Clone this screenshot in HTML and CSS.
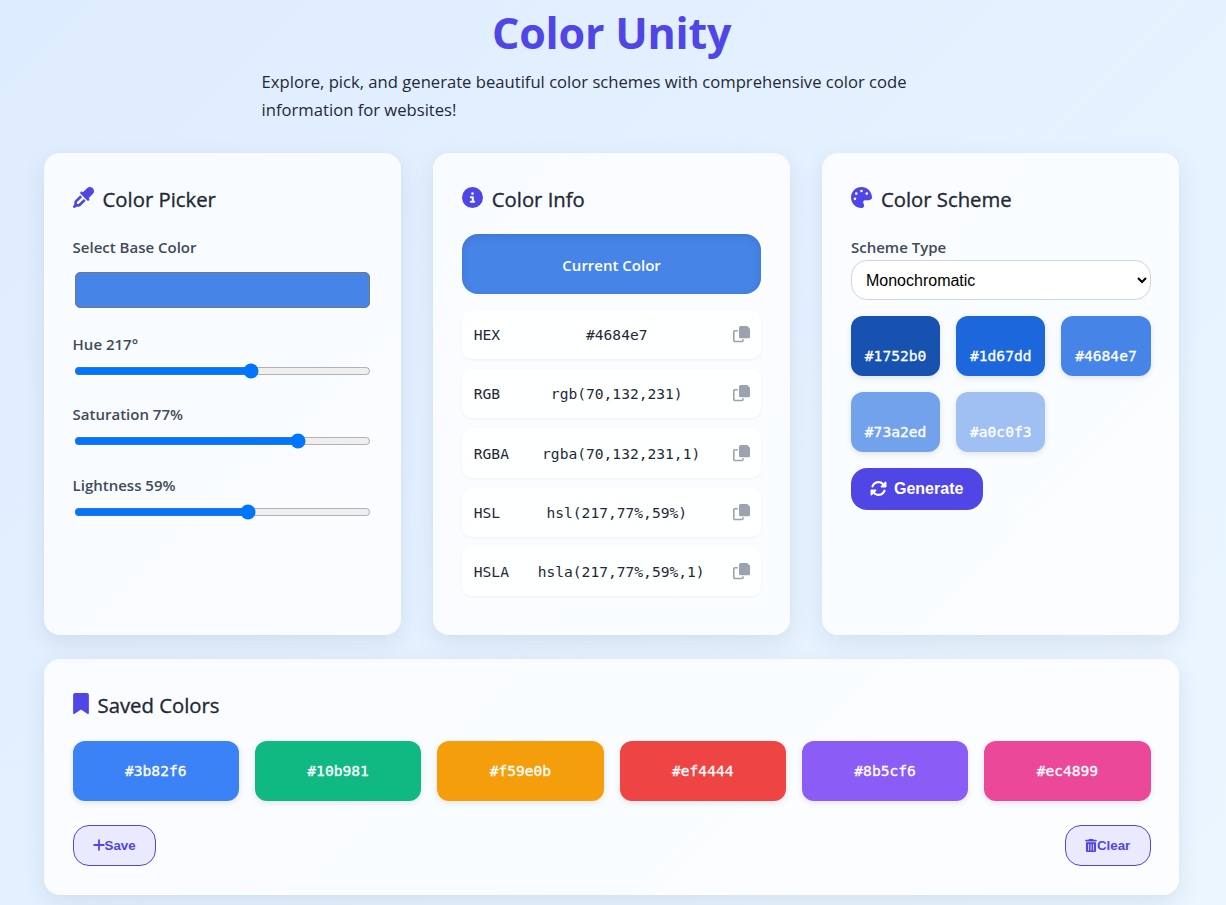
FILE: index.html
```html
<!DOCTYPE html>
<html lang="en">
<head>
<meta charset="utf-8">
<title>Color Unity</title>
<link rel="stylesheet" href="styles.css">
</head>
<body>
<svg class="sprite" width="0" height="0">
  <symbol id="copy" viewBox="0 0 17 17"><path d="M7.500 0H14.300L17 2.700V10.700A1.500 1.500 0 0 1 15.500 12.200H7.500A1.500 1.500 0 0 1 6 10.700V1.500A1.500 1.500 0 0 1 7.500 0z"/><path class="copy-back" d="M4.800 4.800H1.800A1 1 0 0 0 .8 5.800V14.500A1 1 0 0 0 1.800 15.500H9A1 1 0 0 0 10 14.500V13.200"/></symbol>
</svg>
<div class="container">
  <header class="header">
    <h1 class="title">Color Unity</h1>
    <p class="lead">Explore, pick, and generate beautiful color schemes with comprehensive color code<br>information for websites!</p>
  </header>
  <main class="grid">
    <section class="card">
      <h2 class="heading"><svg class="icon" viewBox="0 0 512 512"><path d="M341.6 29.2L240.100 130.800l-9.400-9.400c-12.500-12.500-32.800-12.500-45.300 0s-12.500 32.800 0 45.300l160 160c12.500 12.500 32.800 12.500 45.300 0s12.500-32.800 0-45.300l-9.400-9.400L482.800 170.400c39-39 39-102.200 0-141.100s-102.200-39-141.100 0zM55.400 323.300c-15 15-23.400 35.400-23.400 56.600v42.400L5.400 462.200c-8.500 12.700-6.800 29.600 4 40.400s27.700 12.500 40.400 4L89.700 480h42.400c21.200 0 41.600-8.400 56.600-23.400L309.400 335.900l-45.300-45.300L143.400 411.300c-3 3-7.100 4.700-11.300 4.700H96V379.900c0-4.200 1.700-8.300 4.700-11.300L221.400 247.900l-45.300-45.300L55.400 323.300z"/></svg><span>Color Picker</span></h2>
      <label class="label t-select" for="base">Select Base Color</label>
      <input class="base" id="base" type="color" value="#4684e7">
      <div class="control"><label class="label t-hue" for="hue">Hue 217°</label><input class="range" id="hue" type="range" min="0" max="360" value="217"></div>
      <div class="control"><label class="label t-sat" for="sat">Saturation 77%</label><input class="range" id="sat" type="range" min="0" max="100" value="77"></div>
      <div class="control"><label class="label t-light" for="light">Lightness 59%</label><input class="range" id="light" type="range" min="0" max="100" value="59"></div>
    </section>
    <section class="card">
      <h2 class="heading"><svg class="icon" viewBox="0 0 512 512"><path d="M256 512A256 256 0 1 0 256 0a256 256 0 1 0 0 512zM216 336h24V272H216c-13.300 0-24-10.700-24-24s10.700-24 24-24h48c13.300 0 24 10.700 24 24v88h8c13.300 0 24 10.700 24 24s-10.700 24-24 24H216c-13.300 0-24-10.700-24-24s10.700-24 24-24zm40-208a32 32 0 1 1 0 64 32 32 0 1 1 0-64z"/></svg><span>Color Info</span></h2>
      <div class="current">Current Color</div>
      <div class="codes">
        <div class="code"><span>HEX</span><span>#4684e7</span><svg class="copy"><use href="#copy"/></svg></div>
        <div class="code"><span>RGB</span><span>rgb(70,132,231)</span><svg class="copy"><use href="#copy"/></svg></div>
        <div class="code"><span>RGBA</span><span>rgba(70,132,231,1)</span><svg class="copy"><use href="#copy"/></svg></div>
        <div class="code"><span>HSL</span><span>hsl(217,77%,59%)</span><svg class="copy"><use href="#copy"/></svg></div>
        <div class="code"><span>HSLA</span><span>hsla(217,77%,59%,1)</span><svg class="copy"><use href="#copy"/></svg></div>
      </div>
    </section>
    <section class="card">
      <h2 class="heading"><svg class="icon" viewBox="0 0 512 512"><path d="M512 256c0 .9 0 1.800 0 2.700c-.4 36.500-33.600 61.300-70.100 61.300H344c-26.500 0-48 21.500-48 48c0 3.400 .4 6.700 1 9.900c2.100 10.200 6.500 20 10.800 29.900c6.100 13.800 12.100 27.500 12.100 42c0 31.800-21.600 60.700-53.400 62c-3.500 .1-7 .2-10.600 .2C114.600 512 0 397.400 0 256S114.600 0 256 0S512 114.600 512 256zM128 288a32 32 0 1 0 -64 0 32 32 0 1 0 64 0zm0-96a32 32 0 1 0 0-64 32 32 0 1 0 0 64zM288 96a32 32 0 1 0 -64 0 32 32 0 1 0 64 0zm96 96a32 32 0 1 0 0-64 32 32 0 1 0 0 64z"/></svg><span>Color Scheme</span></h2>
      <label class="label t-type" for="type">Scheme Type</label>
      <select class="select" id="type"><option>Monochromatic</option></select>
      <div class="scheme">
        <div class="swatch low c1">#1752b0</div><div class="swatch low c2">#1d67dd</div><div class="swatch low c3">#4684e7</div>
        <div class="swatch low c4">#73a2ed</div><div class="swatch low c5">#a0c0f3</div>
      </div>
      <button class="generate"><svg class="sync" viewBox="0 0 512 512"><path d="M142.900 142.900c62.200-62.200 162.700-62.500 225.300-1L327 183c-6.900 6.900-8.900 17.200-5.200 26.200s12.500 14.800 22.200 14.800H472c13.300 0 24-10.700 24-24V72c0-9.700-5.800-18.500-14.800-22.200s-19.300-1.700-26.200 5.200L413.400 96.600c-87.600-86.500-228.700-86.200-315.800 1C73.200 122 55.600 150.700 44.800 181.400c-5.900 16.700 2.900 34.900 19.500 40.800s34.900-2.900 40.800-19.500c7.700-21.800 20.200-42.300 37.800-59.800zM16 312V440c0 9.700 5.800 18.500 14.800 22.200s19.300 1.700 26.200-5.200l41.600-41.600c87.600 86.500 228.700 86.200 315.800-1c24.400-24.400 42.100-53.100 52.900-83.700c5.900-16.700-2.900-34.900-19.500-40.800s-34.900 2.900-40.800 19.500c-7.700 21.800-20.200 42.300-37.800 59.800c-62.200 62.200-162.700 62.500-225.300 1L185 329c6.900-6.900 8.900-17.200 5.200-26.200s-12.500-14.800-22.200-14.800H40c-13.300 0-24 10.700-24 24z"/></svg>Generate</button>
    </section>
  </main>
  <section class="card saved">
    <h2 class="heading"><svg class="icon mark" viewBox="0 0 384 512"><path d="M0 48V487.700C0 501.100 10.900 512 24.300 512c5 0 9.900-1.500 14-4.400L192 400 345.700 507.600c4.100 2.900 9 4.400 14 4.400c13.400 0 24.300-10.900 24.300-24.300V48c0-26.500-21.500-48-48-48H48C21.500 0 0 21.500 0 48z"/></svg><span>Saved Colors</span></h2>
    <div class="palette">
      <div class="swatch s1">#3b82f6</div><div class="swatch s2">#10b981</div><div class="swatch s3">#f59e0b</div>
      <div class="swatch s4">#ef4444</div><div class="swatch s5">#8b5cf6</div><div class="swatch s6">#ec4899</div>
    </div>
    <div class="actions">
      <button class="outline save"><svg class="plus" viewBox="0 0 12 12"><path d="M5.100.5h1.800v4.600h4.600v1.800H6.900v4.600H5.100V6.900H.5V5.100h4.600z"/></svg>Save</button>
      <button class="outline clear"><svg class="trash" viewBox="0 0 448 512"><path d="M135.200 17.700C140.600 6.800 151.700 0 163.800 0H284.200c12.100 0 23.200 6.800 28.600 17.700L320 32h96c17.700 0 32 14.300 32 32s-14.300 32-32 32H32C14.300 96 0 81.700 0 64S14.300 32 32 32h96l7.200-14.300zM32 128H416V448c0 35.300-28.700 64-64 64H96c-35.300 0-64-28.700-64-64V128zm96 64c-8.800 0-16 7.200-16 16V432c0 8.800 7.200 16 16 16s16-7.200 16-16V208c0-8.800-7.200-16-16-16zm96 0c-8.800 0-16 7.200-16 16V432c0 8.800 7.200 16 16 16s16-7.200 16-16V208c0-8.800-7.200-16-16-16zm96 0c-8.800 0-16 7.200-16 16V432c0 8.800 7.200 16 16 16s16-7.200 16-16V208c0-8.800-7.200-16-16-16z"/></svg>Clear</button>
    </div>
  </section>
</div>
</body>
</html>
```
FILE: styles.css
```css
* { box-sizing: border-box; }
body {
  margin: 0;
  height: 905px;
  overflow: hidden;
  font-family: "Open Sans", "Noto Sans", sans-serif;
  color: #1f2937;
  background: linear-gradient(135deg, #deecff 0%, #ebf6ff 100%);
}
.sprite { position: absolute; }
.container { width: 1135.600px; margin-left: 43.800px; }
.header { height: 153px; padding-top: 1px; display: flex; flex-direction: column; align-items: center; }
.title { margin: 0; font-size: 43px; font-weight: 700; line-height: 64px; letter-spacing: -.2px; color: #4f46e5; }
.lead { margin: 3px 0 0; width: 700px; font-size: 16.640px; font-weight: 400; line-height: 28px; white-space: nowrap; }
.grid { display: grid; grid-template-columns: repeat(3, 1fr); gap: 32px; }
.card {
  height: 482px;
  padding: 28.800px;
  border-radius: 16px;
  background: rgba(255, 255, 255, .8);
  box-shadow: 0 8px 24px rgba(15, 40, 65, .09);
}
.grid .card { min-width: 0; }
.heading { display: flex; gap: 9px; height: 35px; margin: 0; font-size: 20.300px; font-weight: 500; line-height: 35px; white-space: nowrap; -webkit-text-stroke: .35px #1f2937; }
.icon { width: 21px; height: 21px; margin-top: 5px; fill: #4f46e5; }
.mark { width: 16px; }
.label { display: block; height: 26px; font-size: 15px; font-weight: 600; line-height: 26px; color: #414b5a; white-space: nowrap; }
.t-select, .t-type { margin-top: 17px; }
.base { display: block; width: 100%; height: 44px; margin: 8px 0 19px; padding: 0; border: 0; background: none; }
.base::-webkit-color-swatch { border-radius: 5px; }
.control { height: 70.500px; }
.range { display: block; width: calc(100% - 2px); height: 16px; margin: 6px 1px 0; }
.current {
  height: 60px; margin-top: 17px; border-radius: 16px;
  background: #4684e7; color: #fff;
  box-shadow: inset 0 2px 8px rgba(0, 0, 0, .1);
  font-size: 15px; font-weight: 600; line-height: 62px; text-align: center;
}
.codes { display: flex; flex-direction: column; gap: 10px; margin-top: 16px; }
.code {
  display: flex; align-items: center; justify-content: space-between;
  height: 49.300px; padding: 0 11px 0 12px; border-radius: 10px;
  background: rgba(255, 255, 255, .8);
  box-shadow: 0 1px 3px rgba(0, 0, 0, .05);
  font-family: "DejaVu Sans Mono", monospace; font-size: 14.600px;
}
.copy { width: 17px; height: 17px; fill: #9ca3af; }
.copy-back { fill: none; stroke: #9ca3af; stroke-width: 1.600px; }
.select {
  display: block; width: 100%; height: 40px; padding: 1px 10px 0; border: 1px solid #d1d5db; border-radius: 16px;
  background: #fff; color: #000; font-family: "Liberation Sans", Arial, sans-serif; font-size: 16px;
}
.scheme { display: grid; grid-template-columns: repeat(3, 1fr); gap: 16px; margin: 16px 0; }
.swatch {
  display: flex; align-items: center; justify-content: center; height: 60px; border-radius: 12px; color: #fff;
  box-shadow: 0 2px 6px rgba(0, 0, 0, .1);
  font-family: "DejaVu Sans Mono", monospace; font-size: 14.600px; -webkit-text-stroke: .3px #fff;
}
.low { padding-top: 20px; }
.c1 { background: #1752b0; } .c2 { background: #1d67dd; } .c3 { background: #4684e7; } .c4 { background: #73a2ed; } .c5 { background: #a0c0f3; }
.s1 { background: #3b82f6; } .s2 { background: #10b981; } .s3 { background: #f59e0b; } .s4 { background: #ef4444; } .s5 { background: #8b5cf6; } .s6 { background: #ec4899; }
.generate {
  display: flex; align-items: center; gap: 7px; width: 132px; height: 42px; padding: 0 0 0 19px;
  border: 0; border-radius: 16px; background: #4f46e5; color: #fff;
  font: bold 16px "Liberation Sans", Arial, sans-serif;
}
.sync { width: 17px; height: 17px; fill: currentColor; }
.saved { height: 236px; margin-top: 24px; }
.palette { display: grid; grid-template-columns: repeat(6, 1fr); gap: 16px; margin-top: 18px; }
.actions { display: flex; justify-content: space-between; margin-top: 24px; }
.outline {
  display: flex; align-items: center; justify-content: center; height: 41px; padding: 0;
  border: 1px solid #4f46e5; border-radius: 16px; background: #e9eafe; color: #4f46e5;
  font: bold 13.330px "Liberation Sans", Arial, sans-serif;
}
.save { width: 83px; } .clear { width: 86px; }
.plus { width: 12px; height: 12px; fill: currentColor; }
.trash { width: 12px; height: 13.330px; fill: currentColor; }
```
